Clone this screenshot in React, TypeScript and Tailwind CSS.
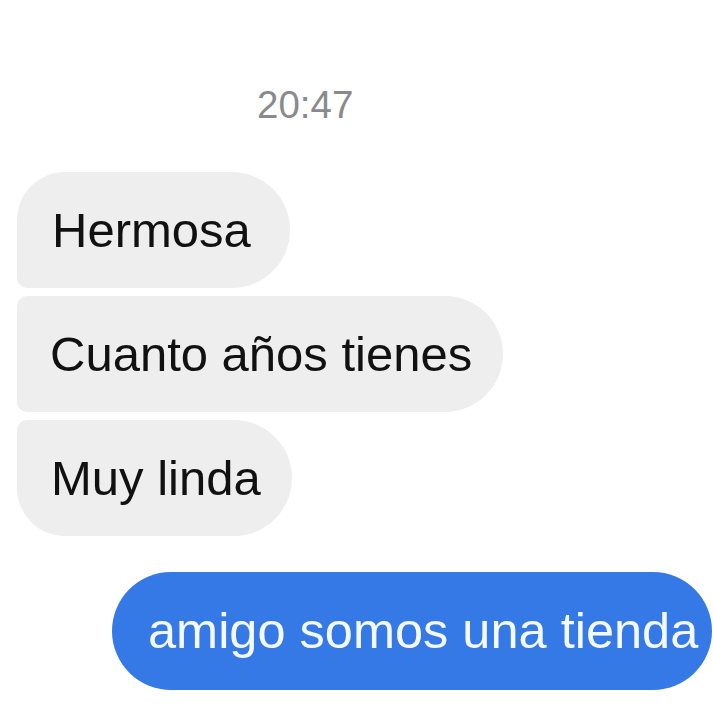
import React from "react";

export default function App() {
  const font = { fontFamily: '"Liberation Sans", Arial, sans-serif' };
  return (
    <div
      className="w-[713px] h-[713px] bg-white flex flex-col overflow-hidden"
      style={font}
    >
      <div className="mt-[86px] h-[38px] pl-[257px] text-[38.5px] leading-none text-[#8a8a8e]">
        20:47
      </div>
      <div className="mt-[48px] pl-[17px] flex flex-col items-start gap-[8px]">
        <div className="h-[116px] w-[273px] flex items-center pl-[35px] bg-[#eeeeee] text-[#111111] text-[49px] leading-none rounded-tl-[48px] rounded-tr-[58px] rounded-br-[58px] rounded-bl-[10px]">
          Hermosa
        </div>
        <div className="h-[116px] w-[486px] flex items-center pl-[33px] bg-[#eeeeee] text-[#111111] text-[49px] leading-none rounded-tl-[10px] rounded-tr-[58px] rounded-br-[58px] rounded-bl-[10px]">
          Cuanto años tienes
        </div>
        <div className="h-[116px] w-[275px] flex items-center pl-[34px] bg-[#eeeeee] text-[#111111] text-[49px] leading-none rounded-tl-[10px] rounded-tr-[58px] rounded-br-[58px] rounded-bl-[48px]">
          Muy linda
        </div>
      </div>
      <div className="mt-[36px] pr-[1px] flex justify-end">
        <div className="h-[118px] w-[600px] flex items-center pl-[36px] bg-[#3579e6] text-[#f4f8ff] text-[50.5px] leading-none rounded-full">
          amigo somos una tienda
        </div>
      </div>
    </div>
  );
}
